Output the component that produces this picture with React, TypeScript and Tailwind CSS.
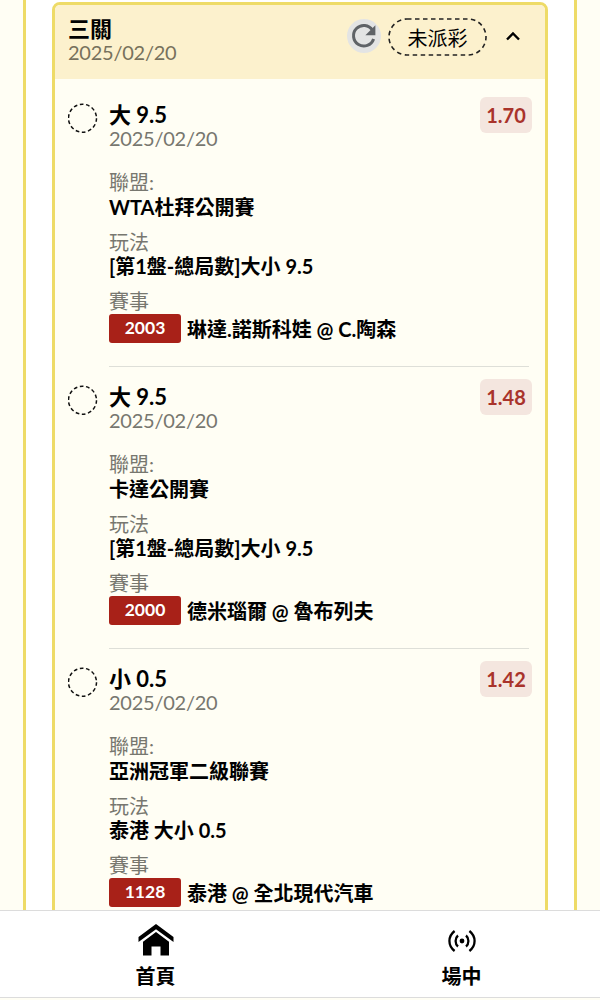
import { useState } from "react";

const bets = [
  {
    pick: "大 9.5",
    date: "2025/02/20",
    odds: "1.70",
    league: "WTA杜拜公開賽",
    play: "[第1盤-總局數]大小 9.5",
    code: "2003",
    match: "琳達.諾斯科娃 @ C.陶森",
  },
  {
    pick: "大 9.5",
    date: "2025/02/20",
    odds: "1.48",
    league: "卡達公開賽",
    play: "[第1盤-總局數]大小 9.5",
    code: "2000",
    match: "德米瑙爾 @ 魯布列夫",
  },
  {
    pick: "小 0.5",
    date: "2025/02/20",
    odds: "1.42",
    league: "亞洲冠軍二級聯賽",
    play: "泰港 大小 0.5",
    code: "1128",
    match: "泰港 @ 全北現代汽車",
  },
];

type Bet = (typeof bets)[number];

const DashedCircle = () => (
  <svg className="mt-px h-[30px] w-[30px]" viewBox="0 0 30 30" fill="none">
    <circle cx="14.5" cy="15.2" r="14" stroke="#111" strokeWidth="1.5" strokeDasharray="3.7 2.583" />
  </svg>
);

const RefreshIcon = () => (
  <svg className="h-[34px] w-[34px]" viewBox="0 0 34 34" fill="none">
    <circle cx="17" cy="17" r="17" fill="#e3e4e4" />
    <path d="M25.500 11.200A10.300 10.300 0 1 0 26.600 20" stroke="#5f6367" strokeWidth="3" />
    <path d="M28.400 6.200v10H18.400z" fill="#5f6367" />
  </svg>
);

const HomeIcon = () => (
  <svg className="h-[32px] w-[36px]" viewBox="0 0 36 32" fill="#000">
    <path d="M18 0 35.5 13v5L18 5.2.5 18v-5z" />
    <path d="M18 8 31 17.7V31.5H22.500V22.500H13.500V31.500H5V17.700z" />
  </svg>
);

const LiveIcon = () => (
  <svg className="h-[22px] w-[28px]" viewBox="0 0 28 22" fill="none" stroke="#000" strokeWidth="2.3">
    <circle cx="14" cy="11" r="2.4" fill="#000" stroke="none" />
    <path d="M10 5.500C6.800 8.200 6.800 13.800 10 16.500M18 5.500C21.200 8.200 21.200 13.800 18 16.500" />
    <path d="M6.600 1C-.300 6.400-.300 15.600 6.600 21M21.400 1C28.300 6.400 28.300 15.600 21.400 21" />
  </svg>
);

const BetRow = ({ bet }: { bet: Bet }) => (
  <div className="flex h-[282px] pt-[17px] pl-3">
    <div className="w-[42px] shrink-0 pl-px">
      <DashedCircle />
    </div>
    <div className="mr-4 flex-1 border-b border-[#dedfd8]">
      <div className="flex justify-between">
        <div>
          <div className="text-[22px] leading-[26px] font-bold">{bet.pick}</div>
          <div className="-mt-px text-xl leading-[22px] tracking-[-0.25px] text-[#77776f]">{bet.date}</div>
        </div>
        <div className="-mt-[5px] -mr-[3px] flex h-9 w-[52px] items-center justify-center rounded-md bg-[#f4e6df] pb-px text-xl font-bold text-[#a9332b]">
          {bet.odds}
        </div>
      </div>
      <div className="mt-[22px] text-xl leading-[22px] text-[#77776f]">聯盟:</div>
      <div className="mt-px text-xl leading-[26px] font-bold">{bet.league}</div>
      <div className="mt-[11px] text-xl leading-[22px] text-[#77776f]">玩法</div>
      <div className="text-xl leading-[26px] font-bold">{bet.play}</div>
      <div className="mt-[11px] text-xl leading-[22px] text-[#77776f]">賽事</div>
      <div className="mt-[2px] flex h-[29px] items-center gap-[6px] text-xl font-bold">
        <span className="flex h-[29px] w-[72px] items-center justify-center rounded-[3px] bg-[#a82118] text-[17.5px] font-bold text-white">
          {bet.code}
        </span>
        <span>{bet.match}</span>
      </div>
    </div>
  </div>
);

const App = () => {
  const [open, setOpen] = useState(true);

  return (
    <div className="flex h-[1000px] w-[600px] flex-col overflow-hidden bg-[#fffef4] font-['Lato','Noto_Sans_CJK_TC',sans-serif] whitespace-nowrap text-black">
      <main className="h-[910px] shrink-0 overflow-hidden">
        <div className="mr-[23px] ml-[23px] h-full border-x-[3px] border-[#eedb67] bg-white px-[26px] pt-[2px]">
          <section className="h-[1000px] overflow-hidden rounded-lg border-[3px] border-[#eedb67] bg-[#fffef4]">
            <header className="flex h-[74px] items-start bg-[#fcf1cd] pl-[13px]">
              <div className="flex-1 pt-[11px]">
                <div className="text-[22px] leading-[26px] font-bold">三關</div>
                <div className="-mt-px text-xl leading-[22px] tracking-[-0.25px] text-[#77715c]">2025/02/20</div>
              </div>
              <button className="mt-[14px]">
                <RefreshIcon />
              </button>
              <div className="relative mt-[13px] ml-[7px] flex h-[38px] w-[99px] items-center justify-center pt-px text-xl">
                <svg className="absolute inset-0" width="99" height="38" fill="none">
                  <rect x="1" y="1" width="97" height="36" rx="18" stroke="#222" strokeWidth="1.6" strokeDasharray="4.5 3.5" />
                </svg>
                未派彩
              </div>
              <button className="mt-[25px] mr-[24px] ml-[18px]" onClick={() => setOpen(!open)}>
                <svg width="16" height="12" viewBox="0 0 16 12" fill="none" stroke="#000" strokeWidth="2.4">
                  <path d="M2 9.500 8 3.500l6 6" />
                </svg>
              </button>
            </header>
            {open && (
              <div className="pt-[6px]">
                {bets.map((bet) => (
                  <BetRow key={bet.code} bet={bet} />
                ))}
              </div>
            )}
          </section>
        </div>
      </main>
      <nav className="flex h-[88px] shrink-0 border-y border-[#dcdcdc] bg-white text-xl font-bold">
        <div className="ml-[56px] flex w-[200px] flex-col items-center pt-[13px]">
          <HomeIcon />
          <span className="mt-[7px] mr-px leading-[26px]">首頁</span>
        </div>
        <div className="ml-[106px] flex w-[200px] flex-col items-center pt-[19px]">
          <LiveIcon />
          <span className="mt-[11px] mr-px leading-[26px]">場中</span>
        </div>
      </nav>
    </div>
  );
};

export default App;
